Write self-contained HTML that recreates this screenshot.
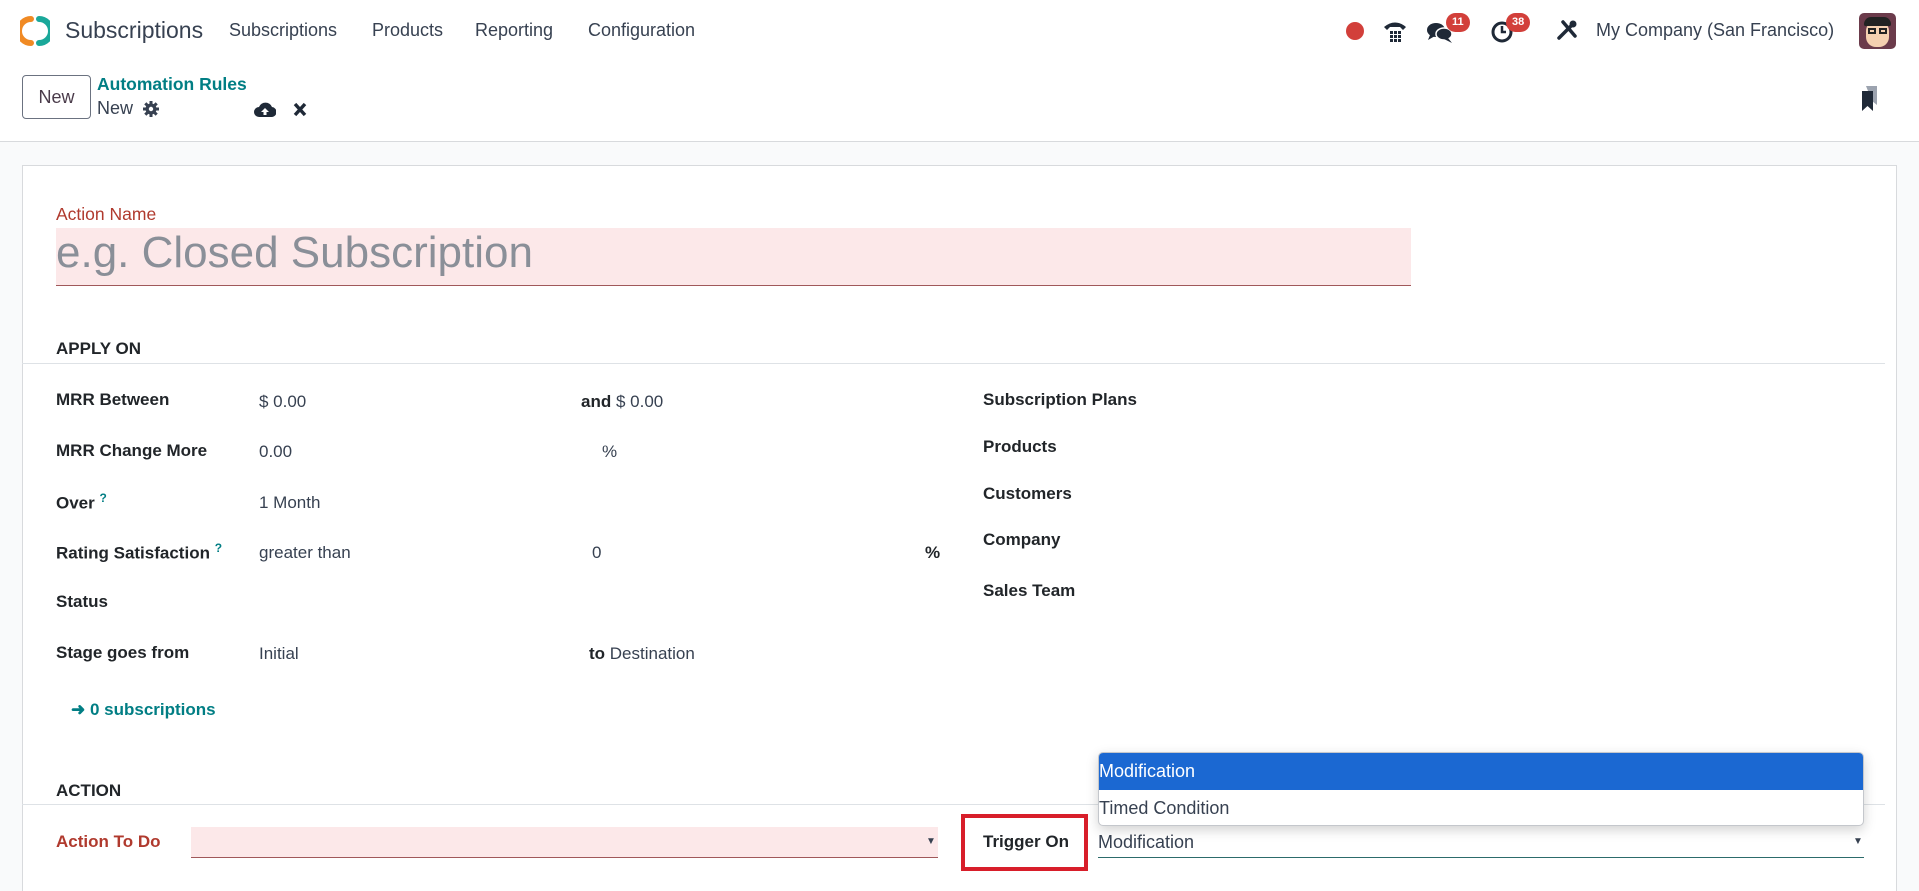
<!DOCTYPE html>
<html style="width:1919px;height:891px;overflow:hidden"><head><meta charset="utf-8"><style>
*{box-sizing:border-box;margin:0;padding:0}
body{width:1919px;height:891px;overflow:hidden;background:#f9fafb;font-family:"Liberation Sans",sans-serif;color:#212529;font-size:17px;position:relative}
.a{position:absolute;white-space:nowrap}
.top{position:absolute;left:0;top:0;width:1919px;height:142px;background:#fff;border-bottom:1px solid #d8dadd}
.b{font-weight:bold}
.card{position:absolute;left:22px;top:165px;width:1875px;height:726px;background:#fff;border:1px solid #d8dadd;border-bottom:none}
.lbl{font-weight:bold;font-size:17px;color:#212529}
.val{font-size:17px;color:#374151}
.badge{position:absolute;background:#d23f3a;color:#fff;font-size:11px;font-weight:bold;border-radius:10px;height:19px;line-height:19px;padding:0 6px}
</style></head><body>
<div class="top">
  <svg class="a" style="left:20px;top:15px" width="30" height="32" viewBox="0 0 30 32">
    <path d="M11 4 A12 12 0 0 0 11 28" stroke="#f08a24" stroke-width="6" fill="none" stroke-linecap="round"/>
    <path d="M19 4 A12 12 0 0 1 19 28" stroke="#1aa89a" stroke-width="6" fill="none" stroke-linecap="round"/>
  </svg>
  <div class="a" style="left:65px;top:17px;font-size:23px;color:#374151">Subscriptions</div>
  <div class="a" style="left:229px;top:20px;font-size:18px;color:#374151">Subscriptions</div>
  <div class="a" style="left:372px;top:20px;font-size:18px;color:#374151">Products</div>
  <div class="a" style="left:475px;top:20px;font-size:18px;color:#374151">Reporting</div>
  <div class="a" style="left:588px;top:20px;font-size:18px;color:#374151">Configuration</div>

  <div class="a" style="left:1346px;top:22px;width:18px;height:18px;border-radius:50%;background:#d23f3a"></div>
  <svg class="a" style="left:1382px;top:19px" width="26" height="24" viewBox="0 0 26 24"><path d="M2 8 Q13 -1 24 8 L21 11 L18 8 L8 8 L5 11Z" fill="#1f2937"/><g fill="#1f2937"><rect x="8" y="12" width="3" height="3"/><rect x="12" y="12" width="3" height="3"/><rect x="16" y="12" width="3" height="3"/><rect x="8" y="16" width="3" height="3"/><rect x="12" y="16" width="3" height="3"/><rect x="16" y="16" width="3" height="3"/><rect x="8" y="20" width="3" height="3"/><rect x="12" y="20" width="3" height="3"/><rect x="16" y="20" width="3" height="3"/></g></svg>
  <svg class="a" style="left:1426px;top:20px" width="28" height="24" viewBox="0 0 28 24"><ellipse cx="10" cy="10" rx="9" ry="7" fill="#1f2937"/><path d="M4 15 L2 20 L9 16Z" fill="#1f2937"/><ellipse cx="18" cy="14" rx="8" ry="6" fill="#1f2937" stroke="#fff" stroke-width="1.5"/><path d="M22 18 L26 23 L18 19Z" fill="#1f2937"/></svg>
  <div class="badge" style="left:1446px;top:13px">11</div>
  <svg class="a" style="left:1490px;top:20px" width="24" height="24" viewBox="0 0 24 24"><circle cx="12" cy="12" r="9" stroke="#1f2937" stroke-width="3" fill="none"/><path d="M12 6 V12 H16" stroke="#1f2937" stroke-width="2.5" fill="none"/></svg>
  <div class="badge" style="left:1506px;top:13px">38</div>
  <svg class="a" style="left:1556px;top:19px" width="22" height="22" viewBox="0 0 22 22"><path d="M3 19 L15 7 M7 3 L19 17" stroke="#1f2937" stroke-width="3.5" stroke-linecap="round"/><circle cx="17" cy="5" r="3.5" fill="#1f2937"/></svg>
  <div class="a" style="left:1596px;top:20px;font-size:18px;color:#374151">My Company (San Francisco)</div>
  <div class="a" style="left:1859px;top:13px;width:37px;height:36px;border-radius:5px;background:#6b3b4b;overflow:hidden">
    <div style="position:absolute;left:7px;top:8px;width:23px;height:26px;border-radius:10px;background:#f5d0b0"></div>
    <div style="position:absolute;left:5px;top:4px;width:27px;height:9px;border-radius:8px 8px 2px 2px;background:#222"></div>
    <div style="position:absolute;left:9px;top:15px;width:8px;height:6px;border:2px solid #222"></div>
    <div style="position:absolute;left:20px;top:15px;width:8px;height:6px;border:2px solid #222"></div>
  </div>

  <div class="a" style="left:22px;top:75px;width:69px;height:44px;border:1px solid #6b7280;border-radius:4px;text-align:center;line-height:42px;font-size:18px;color:#4a3b4a">New</div>
  <div class="a b" style="left:97px;top:74px;font-size:17.5px;color:#017e84">Automation Rules</div>
  <div class="a" style="left:97px;top:98px;font-size:18px;color:#374151">New</div>
  <svg class="a" style="left:143px;top:101px" width="16" height="16" viewBox="0 0 16 16"><circle cx="8" cy="8" r="5.5" fill="#374151"/><g stroke="#374151" stroke-width="3"><path d="M8 0V16M0 8H16M2.3 2.3L13.7 13.7M13.7 2.3L2.3 13.7"/></g><circle cx="8" cy="8" r="2.2" fill="#fff"/></svg>
  <svg class="a" style="left:254px;top:101px" width="22" height="16" viewBox="0 0 22 16"><path d="M5 16 A5 5 0 0 1 5 6 A7 7 0 0 1 18 6 A5 5 0 0 1 17 16Z" fill="#1f2937"/><path d="M11 7 L7 11 H9.5 V14 H12.5 V11 H15Z" fill="#fff"/></svg>
  <svg class="a" style="left:293px;top:102px" width="14" height="15" viewBox="0 0 14 15"><path d="M2 2 L12 13 M12 2 L2 13" stroke="#1f2937" stroke-width="3.4"/></svg>
  <svg class="a" style="left:1861px;top:85px" width="18" height="26" viewBox="0 0 18 26"><path d="M5 1 H16 V20 L11 16 Z" fill="#9ca3af"/><path d="M1 6 H12 V26 L6.5 21 L1 26Z" fill="#1f2937"/></svg>
</div>

<div class="card"></div>
<div class="a" style="left:56px;top:204px;font-size:17.5px;color:#b03a2e">Action Name</div>
<div class="a" style="left:56px;top:228px;width:1355px;height:58px;background:#fce8e9;border-bottom:1px solid #a0585a"></div>
<div class="a" style="left:56px;top:228px;font-size:44px;color:#8a8f98">e.g. Closed Subscription</div>

<div class="a b" style="left:56px;top:339px;font-size:17px">APPLY ON</div>
<div class="a" style="left:22px;top:363px;width:1863px;height:1px;background:#dee2e6"></div>

<div class="a lbl" style="left:56px;top:390px">MRR Between</div>
<div class="a val" style="left:259px;top:392px">$ 0.00</div>
<div class="a" style="left:581px;top:392px"><b>and</b> <span class="val">$ 0.00</span></div>
<div class="a lbl" style="left:56px;top:441px">MRR Change More</div>
<div class="a val" style="left:259px;top:442px">0.00</div>
<div class="a val" style="left:602px;top:442px">%</div>
<div class="a lbl" style="left:56px;top:491px">Over <sup style="color:#017e84;font-size:12px">?</sup></div>
<div class="a val" style="left:259px;top:493px">1 Month</div>
<div class="a lbl" style="left:56px;top:541px">Rating Satisfaction <sup style="color:#017e84;font-size:12px">?</sup></div>
<div class="a val" style="left:259px;top:543px">greater than</div>
<div class="a val" style="left:592px;top:543px">0</div>
<div class="a lbl" style="left:925px;top:543px">%</div>
<div class="a lbl" style="left:56px;top:592px">Status</div>
<div class="a lbl" style="left:56px;top:643px">Stage goes from</div>
<div class="a val" style="left:259px;top:644px">Initial</div>
<div class="a" style="left:589px;top:644px"><b>to</b> <span class="val">Destination</span></div>
<div class="a b" style="left:71px;top:700px;color:#017e84">➜ 0 subscriptions</div>

<div class="a lbl" style="left:983px;top:390px">Subscription Plans</div>
<div class="a lbl" style="left:983px;top:437px">Products</div>
<div class="a lbl" style="left:983px;top:484px">Customers</div>
<div class="a lbl" style="left:983px;top:530px">Company</div>
<div class="a lbl" style="left:983px;top:581px">Sales Team</div>

<div class="a b" style="left:56px;top:781px;font-size:17px">ACTION</div>
<div class="a" style="left:22px;top:804px;width:1863px;height:1px;background:#dee2e6"></div>
<div class="a b" style="left:56px;top:832px;color:#b03a2e">Action To Do</div>
<div class="a" style="left:191px;top:827px;width:747px;height:31px;background:#fce8e9;border-bottom:1px solid #a0585a"></div>
<div class="a" style="left:926px;top:836px;font-size:10px;color:#374151">▼</div>

<div class="a" style="left:961px;top:814px;width:127px;height:57px;border:4px solid #d81e2a"></div>
<div class="a lbl" style="left:983px;top:832px">Trigger On</div>
<div class="a" style="left:1098px;top:827px;width:766px;height:31px;border-bottom:1px solid #2c6b6b"></div>
<div class="a val" style="left:1098px;top:832px;font-size:18px">Modification</div>
<div class="a" style="left:1853px;top:836px;font-size:10px;color:#374151">▼</div>

<div class="a" style="left:1098px;top:752px;width:766px;height:74px;background:#fff;border:1px solid #c4c7cc;border-radius:5px;box-shadow:0 4px 12px rgba(0,0,0,.18);overflow:hidden">
  <div style="height:37px;background:#1b68d2;color:#fff;font-size:18px;line-height:37px">Modification</div>
  <div style="height:36px;color:#374151;font-size:18px;line-height:36px">Timed Condition</div>
</div>
</body></html>
